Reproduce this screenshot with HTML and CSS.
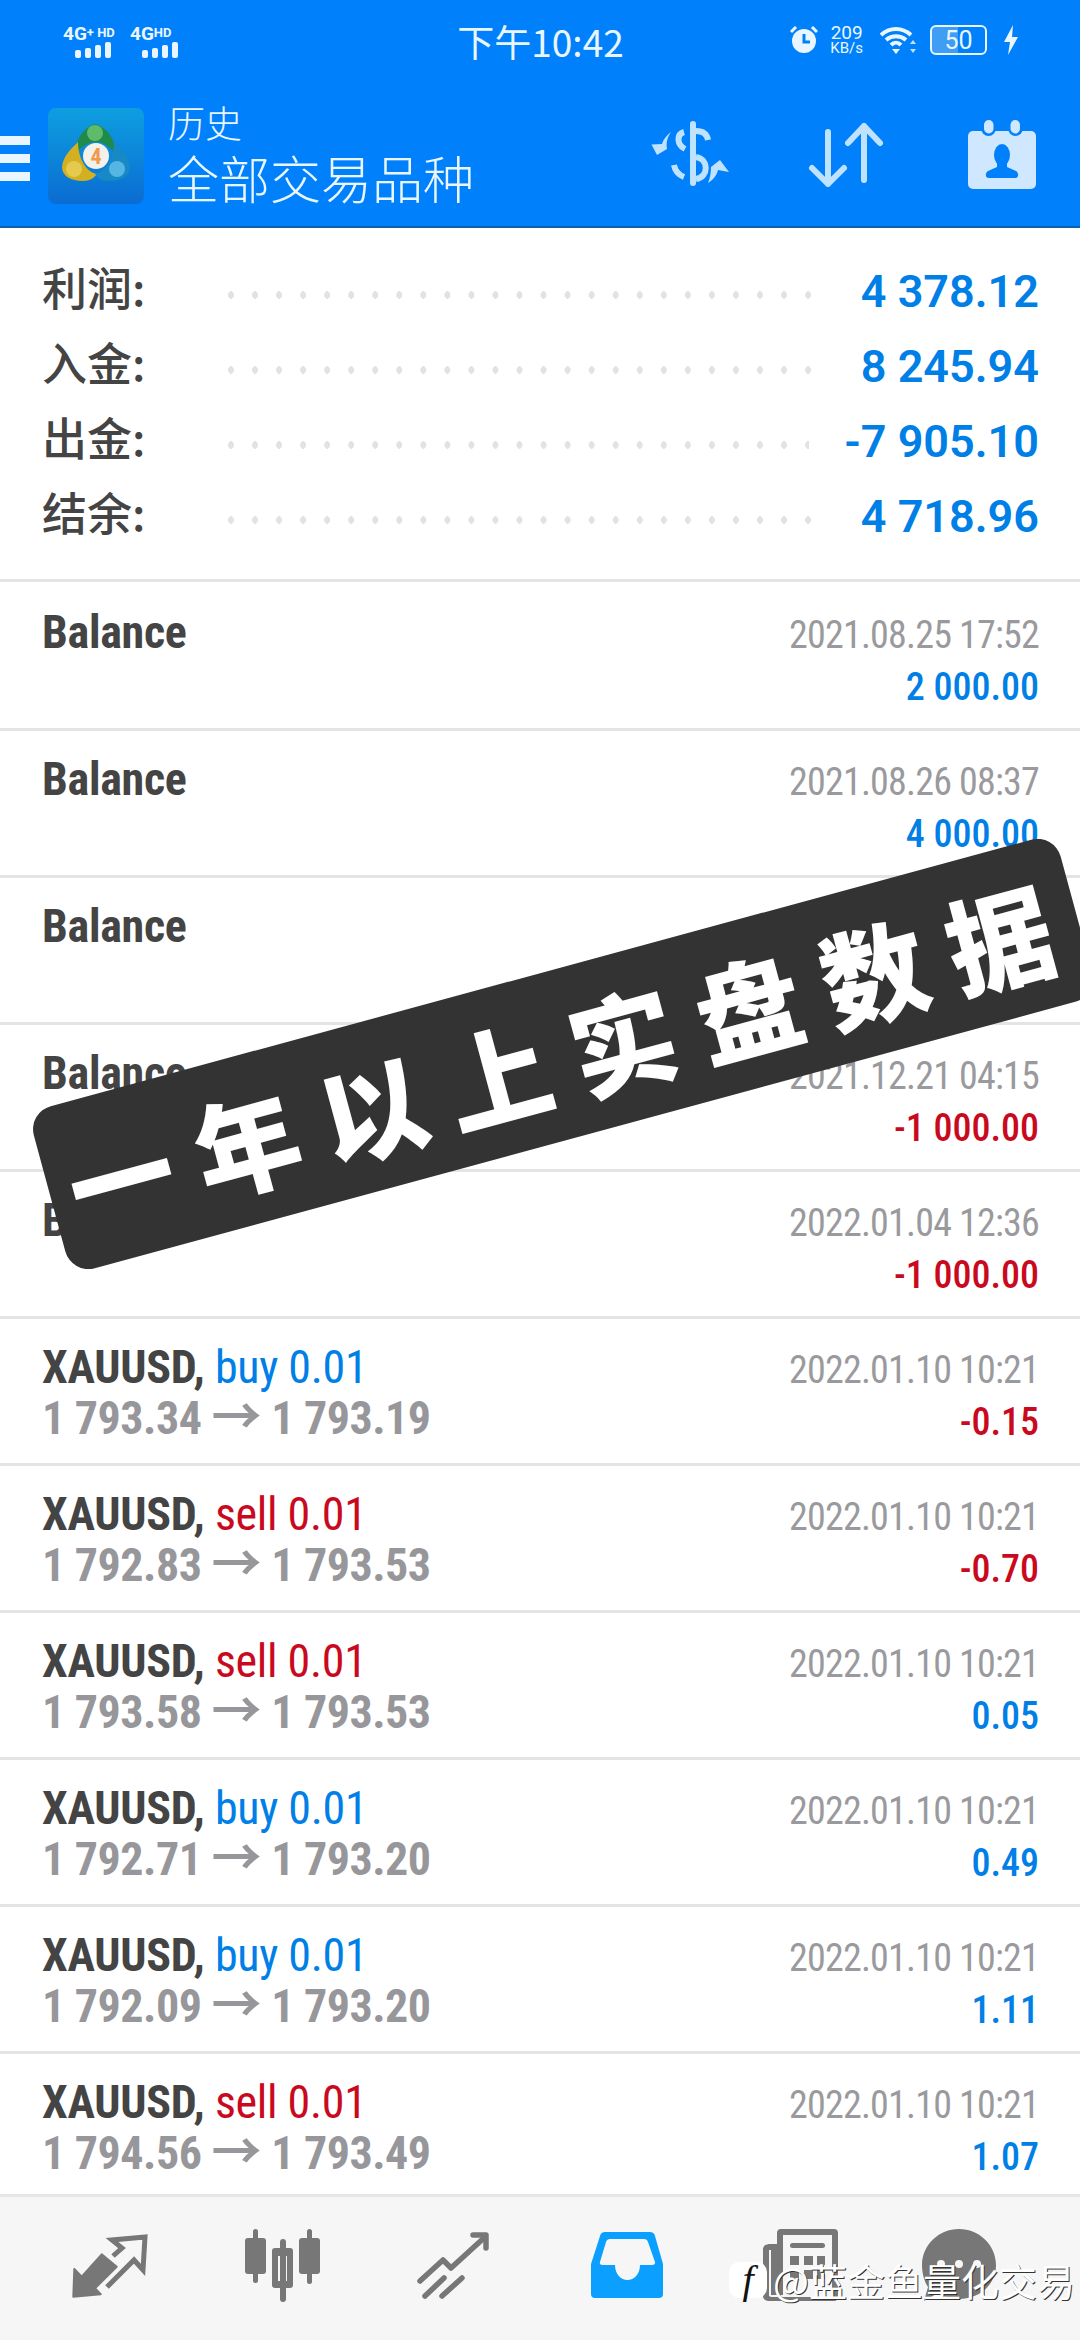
FILE: index.html
```html
<!DOCTYPE html>
<html lang="zh-CN">
<head>
    <meta charset="UTF-8">
    <meta name="viewport" content="width=device-width, initial-scale=1.0">
    <title>历史</title>
    <link rel="stylesheet" href="styles.css">
</head>
<body>
    <div class="screen">
        <header class="appbar">
            <div class="statusbar">
                <div class="status-left">
                    <div class="sim">
                        <div class="sim-label">4G<small>+ HD</small></div>
                        <svg class="bars" width="36" height="16" viewBox="0 0 36 16"><rect x="0" y="8" width="6" height="8" rx="2"/><rect x="10" y="6" width="6" height="10" rx="2"/><rect x="20" y="3" width="6" height="13" rx="2"/><rect x="30" y="0" width="6" height="16" rx="2"/></svg>
                    </div>
                    <div class="sim">
                        <div class="sim-label">4G<small>HD</small></div>
                        <svg class="bars" width="36" height="16" viewBox="0 0 36 16"><rect x="0" y="8" width="6" height="8" rx="2"/><rect x="10" y="6" width="6" height="10" rx="2"/><rect x="20" y="3" width="6" height="13" rx="2"/><rect x="30" y="0" width="6" height="16" rx="2"/></svg>
                    </div>
                </div>
                <div class="clock">下午10:42</div>
                <div class="status-right">
                    <svg width="28" height="28" viewBox="0 0 28 28"><circle cx="14" cy="15" r="12" fill="#eaf6ff"/><path d="M14 8v8h6" fill="none" stroke="#0081fb" stroke-width="3"/><path d="M1 6l5-5M27 6l-5-5" stroke="#eaf6ff" stroke-width="3"/></svg>
                    <div class="speed"><span>209</span><span class="speed-unit">KB/s</span></div>
                    <svg class="wifi" width="38" height="28" viewBox="0 0 38 28"><path d="M1 9c9-8 21-8 30 0M6 14c6-5 14-5 20 0M11 19c3-3 7-3 10 0" fill="none" stroke="#eaf6ff" stroke-width="4"/><path d="M12 23h8l-4 5z" fill="#eaf6ff"/><path d="M33 14l3 4h-6zM33 27l3-4h-6z" fill="#bfe3ff"/></svg>
                    <div class="battery"><span class="battery-num">50</span></div>
                    <svg class="bolt" width="14" height="30" viewBox="0 0 14 30"><path d="M9 0L0 17h6L4 30l10-18H8z" fill="#eaf6ff"/></svg>
                </div>
            </div>
            <div class="toolbar">
                <div class="menu"><i></i><i></i><i></i></div>
                <svg class="logo" width="96" height="96" viewBox="0 0 96 96">
                    <defs>
                        <linearGradient id="logoBg" x1="0" y1="0" x2="0" y2="1"><stop offset="0" stop-color="#0e9fe0"/><stop offset="1" stop-color="#0a6cd2"/></linearGradient>
                    </defs>
                    <rect width="96" height="96" rx="8" fill="url(#logoBg)"/>
                    <path d="M47 16c13 4 21 16 20 30-5-8-12-12-19-12s-15 4-20 12c-1-14 7-26 19-30z" fill="#1f8a4c"/>
                    <path d="M30 34c-7 7-15 14-16 25 0 9 9 14 21 14 7 0 11-3 14-7-11-2-19-16-19-32z" fill="#d3b021"/>
                    <path d="M66 34c7 7 15 14 16 25 0 9-9 14-21 14-7 0-11-3-14-7 11-2 19-16 19-32z" fill="#178ac6"/>
                    <circle cx="47" cy="25" r="8" fill="#5fbb6c"/>
                    <circle cx="26" cy="61" r="8" fill="#e6c94f"/>
                    <circle cx="69" cy="61" r="8" fill="#55b6e4"/>
                    <circle cx="48" cy="48" r="13" fill="#f4f1ea"/>
                    <text x="48" y="56" text-anchor="middle" class="logo-num">4</text>
                </svg>
                <div class="titles">
                    <div class="title-small">历史</div>
                    <div class="title-big">全部交易品种</div>
                </div>
                <div class="actions">
                    <svg width="80" height="80" viewBox="0 0 80 80" fill="#bfe3ff">
                        <path d="M43 9v59" stroke="#bfe3ff" stroke-width="6" stroke-linecap="round"/>
                        <path d="M46 16c7 0 11 3 12 9M34 17c-7 2-8 12 1 17M46 42c13 2 13 20 0 22M24 50c1 6 5 10 10 12" fill="none" stroke="#bfe3ff" stroke-width="6"/>
                        <path d="M21 17c-5 4-8 8-9 12L1.500 29.500 7 40l10-6c-1-6 0-11 4-17z"/>
                        <path d="M58 68c5-3 9-8 10-13l11 2-9-12-9 7c0 6-1 11-3 16z"/>
                    </svg>
                    <svg width="80" height="80" viewBox="0 0 80 80" fill="none" stroke="#bfe3ff" stroke-width="6" stroke-linecap="round" stroke-linejoin="round">
                        <path d="M23 17v52M7 53l16 16 16-16"/>
                        <path d="M59 65V11M43 28l16-17 16 17"/>
                    </svg>
                    <svg width="80" height="80" viewBox="0 0 80 80">
                        <rect x="6" y="16" width="68" height="58" rx="5" fill="#cfe7ff"/>
                        <rect x="19" y="2" width="15" height="19" rx="7.500" fill="#0081fb"/>
                        <rect x="46" y="2" width="15" height="19" rx="7.500" fill="#0081fb"/>
                        <rect x="22" y="5" width="9.500" height="13.500" rx="4.700" fill="#cfe7ff"/>
                        <rect x="48.500" y="5" width="9.500" height="13.500" rx="4.700" fill="#cfe7ff"/>
                        <ellipse cx="40" cy="40" rx="8" ry="11" fill="#0081fb"/>
                        <path d="M35 48v4l-9 4c-3 2-3 7 1 7h26c4 0 4-5 1-7l-9-4v-4z" fill="#0081fb"/>
                    </svg>
                </div>
            </div>
        </header>

        <section class="summary">
            <div class="sum-row"><span class="sum-label">利润:</span><span class="leader"></span><span class="sum-value">4 378.12</span></div>
            <div class="sum-row"><span class="sum-label">入金:</span><span class="leader"></span><span class="sum-value">8 245.94</span></div>
            <div class="sum-row"><span class="sum-label">出金:</span><span class="leader"></span><span class="sum-value">-7 905.10</span></div>
            <div class="sum-row"><span class="sum-label">结余:</span><span class="leader"></span><span class="sum-value">4 718.96</span></div>
        </section>

        <section class="deals">
            <div class="deal">
                <div class="deal-left"><div class="deal-name">Balance</div></div>
                <div class="deal-right"><div class="deal-date">2021.08.25 17:52</div><div class="deal-sum up">2 000.00</div></div>
            </div>
            <div class="deal">
                <div class="deal-left"><div class="deal-name">Balance</div></div>
                <div class="deal-right"><div class="deal-date">2021.08.26 08:37</div><div class="deal-sum up">4 000.00</div></div>
            </div>
            <div class="deal">
                <div class="deal-left"><div class="deal-name">Balance</div></div>
                <div class="deal-right"></div>
            </div>
            <div class="deal">
                <div class="deal-left"><div class="deal-name">Balance</div></div>
                <div class="deal-right"><div class="deal-date">2021.12.21 04:15</div><div class="deal-sum down">-1 000.00</div></div>
            </div>
            <div class="deal">
                <div class="deal-left"><div class="deal-name">Balance</div></div>
                <div class="deal-right"><div class="deal-date">2022.01.04 12:36</div><div class="deal-sum down">-1 000.00</div></div>
            </div>
            <div class="deal">
                <div class="deal-left"><div class="deal-name">XAUUSD, <span class="side up">buy 0.01</span></div><div class="deal-price">1 793.34 <span class="arrow">→</span> 1 793.19</div></div>
                <div class="deal-right"><div class="deal-date">2022.01.10 10:21</div><div class="deal-sum down">-0.15</div></div>
            </div>
            <div class="deal">
                <div class="deal-left"><div class="deal-name">XAUUSD, <span class="side down">sell 0.01</span></div><div class="deal-price">1 792.83 <span class="arrow">→</span> 1 793.53</div></div>
                <div class="deal-right"><div class="deal-date">2022.01.10 10:21</div><div class="deal-sum down">-0.70</div></div>
            </div>
            <div class="deal">
                <div class="deal-left"><div class="deal-name">XAUUSD, <span class="side down">sell 0.01</span></div><div class="deal-price">1 793.58 <span class="arrow">→</span> 1 793.53</div></div>
                <div class="deal-right"><div class="deal-date">2022.01.10 10:21</div><div class="deal-sum up">0.05</div></div>
            </div>
            <div class="deal">
                <div class="deal-left"><div class="deal-name">XAUUSD, <span class="side up">buy 0.01</span></div><div class="deal-price">1 792.71 <span class="arrow">→</span> 1 793.20</div></div>
                <div class="deal-right"><div class="deal-date">2022.01.10 10:21</div><div class="deal-sum up">0.49</div></div>
            </div>
            <div class="deal">
                <div class="deal-left"><div class="deal-name">XAUUSD, <span class="side up">buy 0.01</span></div><div class="deal-price">1 792.09 <span class="arrow">→</span> 1 793.20</div></div>
                <div class="deal-right"><div class="deal-date">2022.01.10 10:21</div><div class="deal-sum up">1.11</div></div>
            </div>
            <div class="deal">
                <div class="deal-left"><div class="deal-name">XAUUSD, <span class="side down">sell 0.01</span></div><div class="deal-price">1 794.56 <span class="arrow">→</span> 1 793.49</div></div>
                <div class="deal-right"><div class="deal-date">2022.01.10 10:21</div><div class="deal-sum up">1.07</div></div>
            </div>
        </section>

        <nav class="tabs">
            <svg width="80" height="80" viewBox="0 0 80 80">
                <path d="M3.300 70.700L4.300 43l7.400 7.700 20-22.400 15 12.400L25 62.300l5.700 6z" fill="#777" stroke="#777" stroke-width="2" stroke-linejoin="round"/>
                <path d="M43 30l9-8-10-8 33-3-2 33-9-10-27 27" fill="none" stroke="#777" stroke-width="5"/>
            </svg>
            <svg width="80" height="80" viewBox="0 0 80 80" fill="#777">
                <rect x="10" y="3" width="5" height="54" rx="2.500"/>
                <rect x="2" y="12" width="21" height="36" rx="3"/>
                <rect x="37" y="13" width="6" height="63" rx="3"/>
                <path fill-rule="evenodd" d="M32 22h15a3 3 0 0 1 3 3v34a3 3 0 0 1-3 3H32a3 3 0 0 1-3-3V25a3 3 0 0 1 3-3zm3 8v25h9V30z"/>
                <rect x="64" y="3" width="5" height="55" rx="2.500"/>
                <rect x="56" y="12" width="21" height="36" rx="3"/>
            </svg>
            <svg width="80" height="80" viewBox="0 0 80 80" fill="none" stroke="#777" stroke-width="5.500" stroke-linecap="round" stroke-linejoin="round">
                <path d="M5 55l23-21 8 8 34-31"/>
                <path d="M58 9h13v13"/>
                <path d="M10 70l19-18M27 70l20-18"/>
            </svg>
            <svg width="80" height="80" viewBox="0 0 80 80">
                <path d="M17 6h45q4 0 5 4l8 28v30q0 4-4 4H7q-4 0-4-4V38l9-28q1-4 5-4z" fill="#0ba0ff"/>
                <path d="M22 13h34q3 0 4 3l7 20q.5 3-3 3H52c0 9-6 15-12.500 15S27 48 27 39H15q-4 0-3-3l6-20q1-3 4-3z" fill="#f6f6f6"/>
            </svg>
            <svg width="80" height="80" viewBox="0 0 80 80" fill="#777">
                <path fill-rule="evenodd" d="M21 3h53a4 4 0 0 1 4 4v64a4 4 0 0 1-4 4H8a5 5 0 0 1-5-5V24c0-4 2-6 8-6h6V7a4 4 0 0 1 4-4zm2 6v60h-12V24H9v46l2 1h61V9z"/>
                <rect x="30" y="17" width="35" height="5" rx="2.500"/>
                <rect x="30" y="30" width="9" height="9"/><rect x="44" y="30" width="9" height="9"/><rect x="57" y="30" width="8" height="9"/>
                <rect x="30" y="44" width="9" height="9"/><rect x="44" y="44" width="9" height="9"/><rect x="57" y="44" width="8" height="9"/>
            </svg>
            <svg class="tab-chat" width="80" height="80" viewBox="0 0 80 80">
                <path d="M40 3c20 0 37 16 37 36S60 73 40 73c-8 0-15-2-21-6L5 75l4-14C5 55 3 47 3 39 3 19 20 3 40 3z" fill="#777"/>
                <circle cx="22" cy="38" r="4" fill="#f6f6f6"/><circle cx="40" cy="38" r="4" fill="#f6f6f6"/><circle cx="58" cy="38" r="4" fill="#f6f6f6"/>
            </svg>
        </nav>

        <div class="banner">一年以上实盘数据</div>
        <div class="credit"><span class="credit-mark">f</span><span class="credit-text">@蓝金鱼量化交易</span></div>
    </div>
</body>
</html>
```

FILE: styles.css
```css
* {
    box-sizing: border-box;
}
body {
    margin: 0;
    background: #fff;
    font-family: Roboto, "Noto Sans CJK SC", sans-serif;
    font-stretch: 75%;
}
.screen {
    position: relative;
    width: 1080px;
    height: 2340px;
    overflow: hidden;
    display: flex;
    flex-direction: column;
}

/* top bar */
.appbar {
    height: 228px;
    background: #0081fb;
    border-bottom: 2px solid #0a62ad;
    color: #eaf6ff;
}
.statusbar {
    height: 84px;
    padding: 22px 62px 0 63px;
    display: flex;
    justify-content: space-between;
    align-items: flex-start;
    font-stretch: 100%;
}
.status-left {
    width: 280px;
    display: flex;
    gap: 7px;
    padding-top: 3px;
}
.sim {
    width: 60px;
    display: flex;
    flex-direction: column;
}
.sim-label {
    font-size: 19px;
    line-height: 15px;
    font-weight: 700;
    white-space: nowrap;
}
.sim-label small {
    font-size: 13px;
    vertical-align: 3px;
}
.bars {
    fill: #eaf6ff;
    margin: 1px 0 0 12px;
}
.clock {
    font-size: 37px;
    line-height: 38px;
    font-family: "Noto Sans CJK SC", sans-serif;
}
.status-right {
    width: 280px;
    display: flex;
    justify-content: flex-end;
    align-items: center;
    gap: 12px;
    height: 36px;
}
.speed {
    display: flex;
    flex-direction: column;
    align-items: center;
    font-size: 19px;
    line-height: 16px;
}
.speed-unit {
    font-size: 15px;
    line-height: 14px;
}
.wifi {
    margin-left: 5px;
}
.battery {
    width: 57px;
    height: 30px;
    border: 2px solid #eaf6ff;
    border-radius: 6px;
    display: flex;
    align-items: center;
    justify-content: center;
    background: linear-gradient(90deg, #3f9df5 50%, transparent 50%);
}
.battery-num {
    font-size: 25px;
}
.bolt {
    margin-left: 5px;
}
.toolbar {
    height: 142px;
    display: flex;
    align-items: flex-start;
    padding-top: 24px;
}
.menu {
    width: 30px;
    margin-top: 28px;
    margin-right: 18px;
    display: flex;
    flex-direction: column;
    gap: 9px;
}
.menu i {
    display: block;
    height: 9px;
    background: #eaf6ff;
}
.logo-num {
    font-size: 22px;
    font-weight: 700;
    fill: #ef9a4e;
}
.titles {
    margin-left: 24px;
    font-family: "Noto Sans CJK SC", sans-serif;
    font-stretch: 100%;
    font-weight: 300;
}
.title-small {
    font-size: 37px;
    line-height: 40px;
    margin-top: -6px;
}
.title-big {
    font-size: 51px;
    line-height: 62px;
    margin-top: 4px;
}
.actions {
    margin-left: auto;
    margin-right: 38px;
    display: flex;
    gap: 75px;
    margin-top: 7px;
}
.actions svg:last-child {
    margin-left: 2px;
}

/* totals */
.summary {
    height: 354px;
    padding: 26px 41px 0 42px;
    border-bottom: 3px solid #e4e4e4;
}
.sum-row {
    height: 75px;
    display: flex;
    align-items: center;
}
.sum-label {
    width: 186px;
    font-size: 45px;
    line-height: 60px;
    margin-top: -10px;
    font-family: "Noto Sans CJK SC", sans-serif;
    font-stretch: 100%;
    font-weight: 500;
    color: #444;
}
.leader {
    flex: 1;
    height: 8px;
    margin: 6px 35px 0 0;
    background-image: radial-gradient(ellipse 3px 4px at 3px 4px, #e2e2e2 90%, transparent 100%);
    background-size: 24.05px 8px;
    background-repeat: repeat-x;
}
.sum-value {
    font-size: 45px;
    font-weight: 600;
    font-stretch: 90%;
    color: #0080e6;
}

/* deal list */
.deals {
    flex: 1;
    overflow: hidden;
}
.deal {
    height: 147px;
    padding: 23px 41px 0 42px;
    display: flex;
    justify-content: space-between;
    border-bottom: 3px solid #e4e4e4;
}
.deal:first-child {
    height: 149px;
    padding-top: 25px;
}
.deal-left {
    font-size: 46px;
    line-height: 51px;
    letter-spacing: -.3px;
}
.deal-name {
    font-weight: 700;
    color: #444;
}
.side {
    font-weight: 400;
}
.deal-price {
    font-weight: 700;
    color: #97979b;
    letter-spacing: -.5px;
}
.arrow {
    font-weight: 700;
    font-size: 50px;
    line-height: 40px;
}
.deal-right {
    text-align: right;
    font-size: 38px;
    line-height: 52px;
    padding-top: 2px;
}
.deal-date {
    color: #9a9a9e;
    letter-spacing: -.8px;
}
.deal-sum {
    font-weight: 500;
}
.up {
    color: #0080e6;
}
.down {
    color: #c90a1e;
}

/* bottom tabs */
.tabs {
    height: 146px;
    background: #f6f6f6;
    border-top: 3px solid #e6e6e6;
    padding: 29px 0 0 70px;
    display: flex;
    gap: 92.5px;
}
.tab-chat {
    margin-left: -14px;
}

/* overlays on the screenshot */
.banner {
    position: absolute;
    left: 31px;
    top: 970px;
    width: 1064px;
    height: 168px;
    padding-left: 16px;
    border-radius: 24px;
    background: #333;
    transform: rotate(-15.2deg);
    display: flex;
    align-items: center;
    justify-content: center;
    color: #fff;
    font-family: "Noto Sans CJK SC", sans-serif;
    font-stretch: 100%;
    font-size: 106px;
    font-weight: 900;
    letter-spacing: 24px;
}
.credit {
    position: absolute;
    left: 729px;
    top: 2262px;
    display: flex;
    align-items: center;
    gap: 6px;
}
.credit-mark {
    width: 38px;
    height: 36px;
    border-radius: 10px;
    background: #fff;
    color: #111;
    font-family: "Liberation Serif", serif;
    font-style: italic;
    font-size: 40px;
    line-height: 36px;
    text-align: center;
}
.credit-text {
    font-family: "Noto Sans CJK SC", sans-serif;
    font-stretch: 100%;
    font-size: 38px;
    line-height: 36px;
    color: #fff;
    text-shadow: 1px 1px 0 #333;
    white-space: nowrap;
}
```
